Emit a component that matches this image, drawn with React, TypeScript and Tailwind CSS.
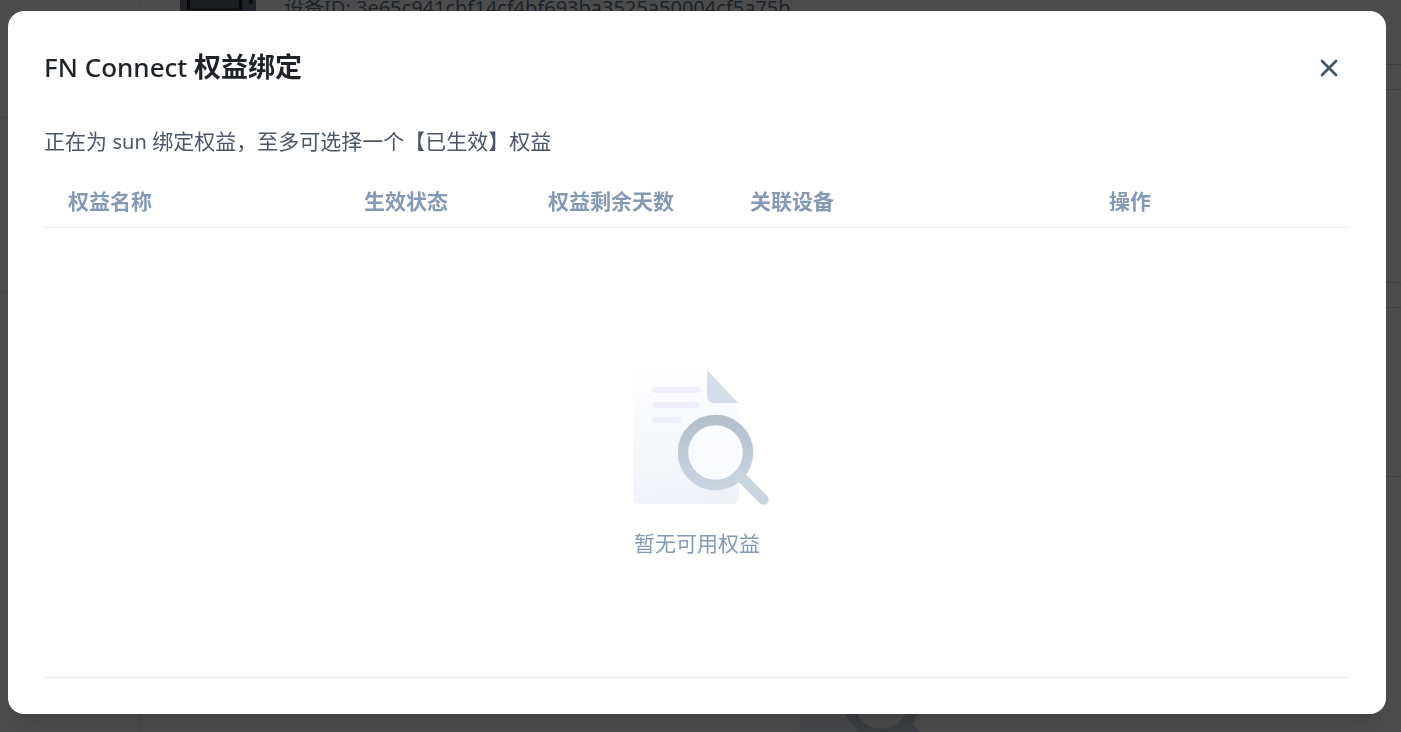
import { useState } from "react";

const columns = [
  { title: "权益名称", width: "w-[296px]" },
  { title: "生效状态", width: "w-[184px]" },
  { title: "权益剩余天数", width: "w-[202px]" },
  { title: "关联设备", width: "w-[359px]" },
  { title: "操作", width: "" },
];

function EmptyIcon({ id }: { id: string }) {
  return (
    <svg width="144" height="136" viewBox="-8 0 144 136" fill="none" aria-hidden="true">
      <defs>
        <linearGradient id={`${id}-page`} x1="40" y1="0" x2="62" y2="135" gradientUnits="userSpaceOnUse">
          <stop stopColor="#fefeff" />
          <stop offset="1" stopColor="#eef2f7" />
        </linearGradient>
        <linearGradient id={`${id}-lens`} x1="82" y1="45" x2="82" y2="135" gradientUnits="userSpaceOnUse">
          <stop stopColor="#b3becb" />
          <stop offset="1" stopColor="#cfd9e6" />
        </linearGradient>
      </defs>
      <path d="M6 0H74L106 33V128a6 6 0 0 1-6 6H6a6 6 0 0 1-6-6V6a6 6 0 0 1 6-6Z" fill={`url(#${id}-page)`} />
      <path d="M74 0L105 33H81a7 7 0 0 1-7-7V0Z" fill="#d5ddea" />
      <path d="M22 20H64M22 35H64M22 50H45" stroke="#eeeffa" strokeWidth="6" strokeLinecap="round" />
      <circle cx="82.5" cy="82.5" r="28" fill="#ffffff" fillOpacity="0.6" />
      <circle cx="82.5" cy="82.5" r="32.5" stroke={`url(#${id}-lens)`} strokeWidth="10.5" />
      <path d="M107 106L130.500 129.500" stroke="#cad5e2" strokeWidth="10.5" strokeLinecap="round" />
    </svg>
  );
}

function DeviceImage() {
  return (
    <svg width="76" height="32" viewBox="0 0 76 32" aria-hidden="true">
      <rect width="76" height="32" fill="#6b7080" />
      <rect x="7" width="55" height="18" fill="#16181f" />
      <rect x="10" width="49" height="17" fill="#5c6270" />
      <rect x="69" width="4" height="12" fill="#2d303a" />
    </svg>
  );
}

function DevicePage() {
  return (
    <div className="flex h-full overflow-hidden bg-white" aria-hidden="true">
      <aside className="w-[140px] shrink-0 border-r border-gray-200">
        <div className="h-[118px] border-b border-gray-200" />
        <div className="h-[175px] border-b border-gray-200" />
      </aside>
      <main className="min-w-0 flex-1">
        <section className="-mt-2 flex h-[73px] gap-7 border-b border-slate-300 pl-10">
          <DeviceImage />
          <p className="text-xl leading-8 text-slate-500">设备ID: 3e65c941cbf14cf4bf693ba3525a50004cf5a75b</p>
        </section>
        <div className="h-[25px] border-b border-gray-300" />
        <div className="h-[193px] border-b border-slate-300" />
        <div className="h-[25px] border-b border-gray-300" />
        <div className="h-[169px] border-b border-gray-300" />
        <section className="flex justify-center pt-[142px] pl-[185px]">
          <EmptyIcon id="page-empty" />
        </section>
      </main>
    </div>
  );
}

export default function App() {
  const [open, setOpen] = useState(true);

  return (
    <div className="h-screen overflow-hidden font-['Noto_Sans','Noto_Sans_CJK_SC',sans-serif]">
      <DevicePage />
      {open && (
        <div className="fixed inset-0 flex bg-black/70 pt-[11px] pr-[15px] pb-[18px] pl-2">
          <div
            role="dialog"
            aria-modal="true"
            aria-labelledby="dialog-title"
            className="flex flex-1 flex-col rounded-2xl bg-white px-9 pb-9 shadow-xl"
          >
            <header className="flex items-center justify-between pt-9 pr-2">
              <h2 id="dialog-title" className="text-[26px] leading-10 font-medium text-[#1f2329]">
                FN Connect <span className="text-[27px] font-bold">权益绑定</span>
              </h2>
              <button type="button" aria-label="关闭" onClick={() => setOpen(false)} className="p-1 text-slate-600">
                <svg width="20" height="20" viewBox="0 0 20 20" fill="none" stroke="currentColor" strokeWidth="2.8" strokeLinecap="round" aria-hidden="true">
                  <path d="M4 4L18 18M18 4L4 18" />
                </svg>
              </button>
            </header>
            <p className="mt-[38px] text-[21px] leading-8 text-[#4b5567]">
              正在为 <span className="text-xl">sun</span> 绑定权益，至多可选择一个【已生效】权益
            </p>
            <table className="mt-7 w-full table-fixed">
              <thead>
                <tr className="border-b border-gray-200">
                  {columns.map((column) => (
                    <th
                      key={column.title}
                      scope="col"
                      className={`${column.width} pb-[10px] pl-6 text-left text-[21px] leading-8 font-bold text-[#8699b3]`}
                    >
                      {column.title}
                    </th>
                  ))}
                </tr>
              </thead>
            </table>
            <div className="flex flex-1 flex-col items-center justify-center gap-[21px] border-b border-gray-200 pt-6">
              <EmptyIcon id="dialog-empty" />
              <p className="text-[21px] leading-8 text-[#8699b3]">暂无可用权益</p>
            </div>
          </div>
        </div>
      )}
    </div>
  );
}
